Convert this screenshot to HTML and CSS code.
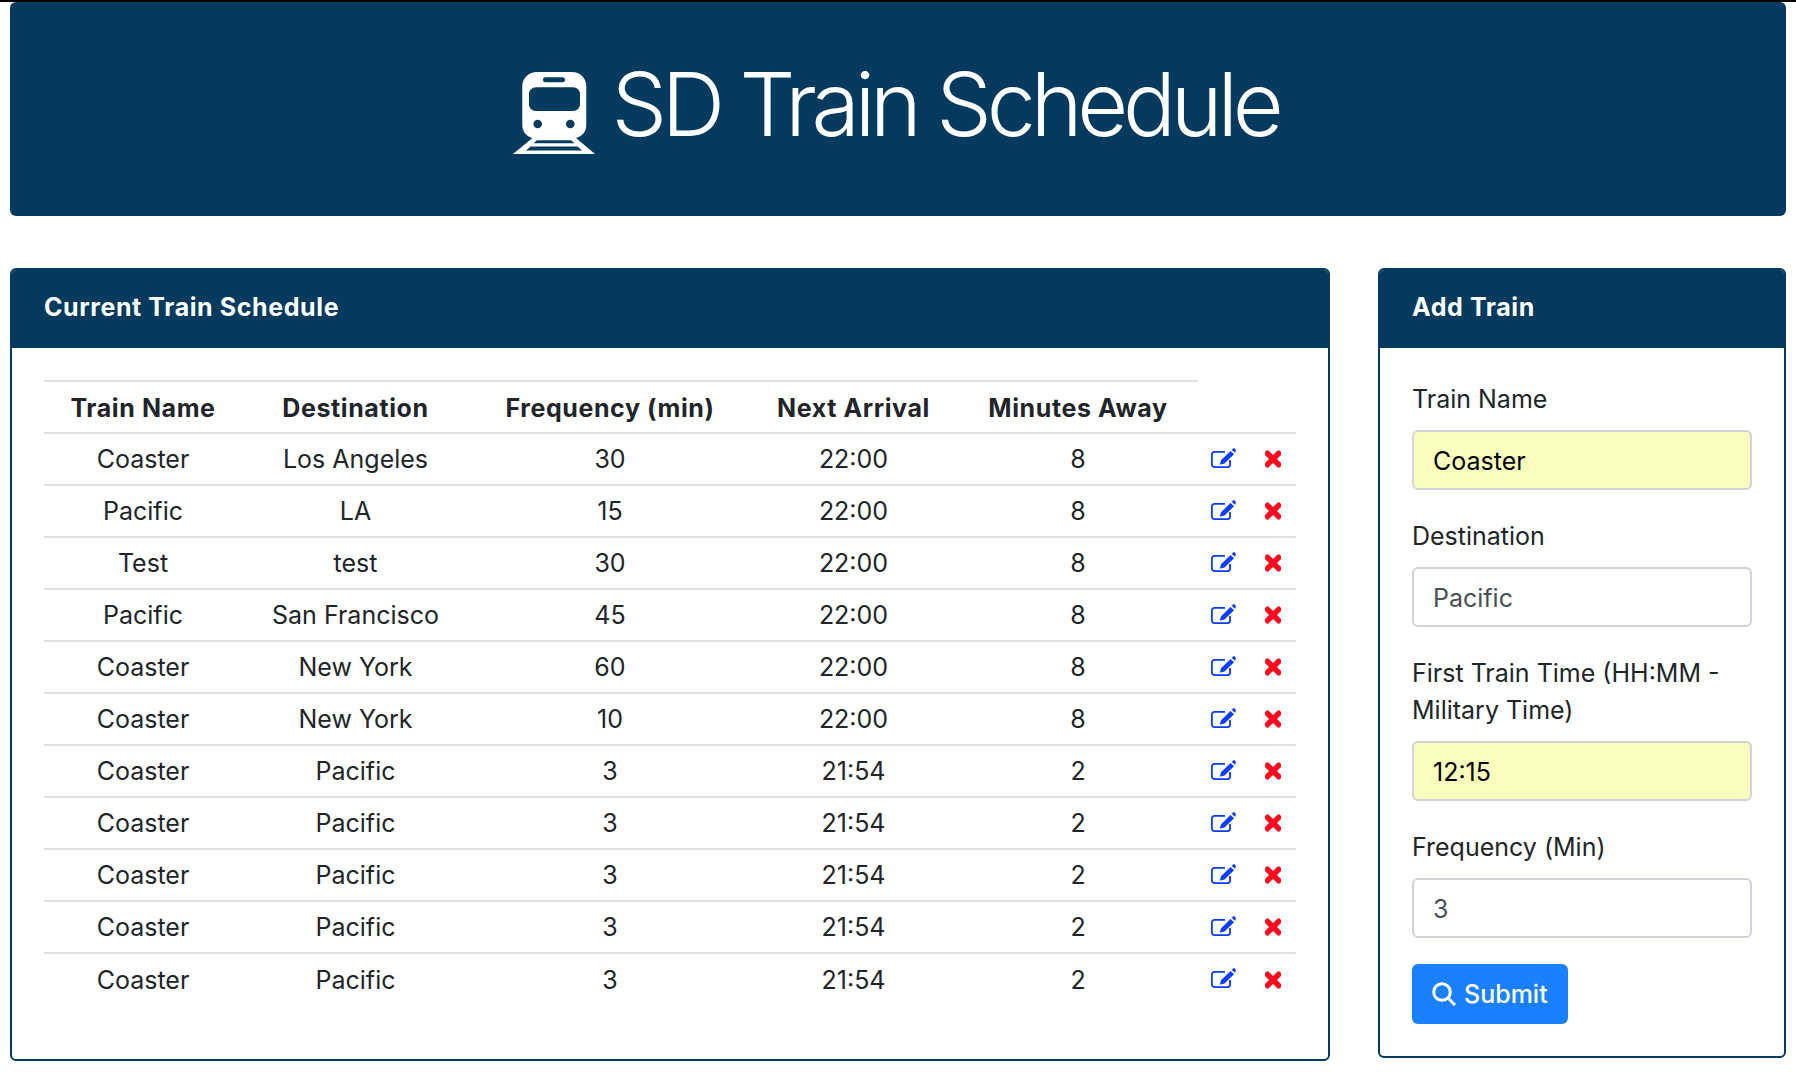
FILE: index.html
```html
<!DOCTYPE html>
<html lang="en">
<head>
<meta charset="utf-8">
<title>SD Train Schedule</title>
<link rel="stylesheet" href="styles.css">
</head>
<body>
<svg class="sprite" aria-hidden="true">
  <symbol id="edit" viewBox="0 0 25 20"><path class="edit-box" d="M19 12V16.500C19 18 18 19.100 16.500 19.100H3.500C2 19.100 .9 18 .9 16.500V6.500C.9 5 2 3.800 3.500 3.800H14"/><path d="M19.600 2.900 23 6.200 13.500 15.600 8.800 16.800 10 12.200ZM20.800 1.700 22 .5C22.500 0 23.200 0 23.700 .5L24.600 1.400C25.100 1.900 25.100 2.600 24.600 3.100L24.100 4.900Z"/></symbol>
  <symbol id="times" viewBox="0 0 352 512"><path d="M242.72 256l100.07-100.07c12.28-12.28 12.28-32.19 0-44.48l-22.24-22.24c-12.28-12.28-32.19-12.28-44.48 0L176 189.28 75.93 89.21c-12.28-12.28-32.19-12.28-44.48 0L9.21 111.45c-12.28 12.28-12.28 32.19 0 44.48L109.28 256 9.21 356.07c-12.28 12.28-12.28 32.19 0 44.48l22.24 22.24c12.28 12.28 32.2 12.28 44.48 0L176 322.72l100.07 100.07c12.28 12.28 32.2 12.28 44.48 0l22.24-22.24c12.28-12.28 12.28-32.19 0-44.48L242.72 256z"/></symbol>
</svg>
<div class="page">
  <header class="banner">
    <h1 class="banner-title">
      <svg class="train-icon" viewBox="0 0 82 82" aria-hidden="true">
        <path fill-rule="evenodd" d="M24 0H59C67 0 73.300 6 73.300 14V53C73.300 60 69 64.500 63 66L82 82H0L19.500 66C13.500 64.500 9.300 60 9.300 53V14C9.300 6 16 0 24 0ZM32.500 5.300A2.500 2.500 0 0 0 32.500 10.300H49.500A2.500 2.500 0 0 0 49.500 5.300ZM23 15.300C19 15.300 16 18.300 16 22.300V32C16 36 19 39 23 39H60C64 39 67 36 67 32V22.300C67 18.300 64 15.300 60 15.300ZM24.700 47.700A4.300 4.300 0 1 0 24.700 56.300A4.300 4.300 0 1 0 24.700 47.700ZM57.300 47.700A4.300 4.300 0 1 0 57.300 56.300A4.300 4.300 0 1 0 57.300 47.700ZM24 68.300 20.500 71.300H61.500L58 68.300ZM17.500 74.500 13 78.500H69L64.500 74.500Z"/>
      </svg>
      <span>SD Train Schedule</span>
    </h1>
  </header>

  <main class="columns">
    <section class="card">
      <h2 class="card-header">Current Train Schedule</h2>
      <div class="card-body card-body-table">
        <table class="schedule">
          <colgroup>
            <col class="col-name"><col class="col-dest"><col class="col-freq"><col class="col-next"><col class="col-away"><col class="col-edit"><col class="col-del">
          </colgroup>
          <thead>
            <tr><th>Train Name</th><th>Destination</th><th>Frequency (min)</th><th>Next Arrival</th><th>Minutes Away</th></tr>
          </thead>
          <tbody>
            <tr><td>Coaster</td><td>Los Angeles</td><td>30</td><td>22:00</td><td>8</td><td><svg class="icon-edit"><use href="#edit"/></svg></td><td><svg class="icon-del"><use href="#times"/></svg></td></tr>
            <tr><td>Pacific</td><td>LA</td><td>15</td><td>22:00</td><td>8</td><td><svg class="icon-edit"><use href="#edit"/></svg></td><td><svg class="icon-del"><use href="#times"/></svg></td></tr>
            <tr><td>Test</td><td>test</td><td>30</td><td>22:00</td><td>8</td><td><svg class="icon-edit"><use href="#edit"/></svg></td><td><svg class="icon-del"><use href="#times"/></svg></td></tr>
            <tr><td>Pacific</td><td>San Francisco</td><td>45</td><td>22:00</td><td>8</td><td><svg class="icon-edit"><use href="#edit"/></svg></td><td><svg class="icon-del"><use href="#times"/></svg></td></tr>
            <tr><td>Coaster</td><td>New York</td><td>60</td><td>22:00</td><td>8</td><td><svg class="icon-edit"><use href="#edit"/></svg></td><td><svg class="icon-del"><use href="#times"/></svg></td></tr>
            <tr><td>Coaster</td><td>New York</td><td>10</td><td>22:00</td><td>8</td><td><svg class="icon-edit"><use href="#edit"/></svg></td><td><svg class="icon-del"><use href="#times"/></svg></td></tr>
            <tr><td>Coaster</td><td>Pacific</td><td>3</td><td>21:54</td><td>2</td><td><svg class="icon-edit"><use href="#edit"/></svg></td><td><svg class="icon-del"><use href="#times"/></svg></td></tr>
            <tr><td>Coaster</td><td>Pacific</td><td>3</td><td>21:54</td><td>2</td><td><svg class="icon-edit"><use href="#edit"/></svg></td><td><svg class="icon-del"><use href="#times"/></svg></td></tr>
            <tr><td>Coaster</td><td>Pacific</td><td>3</td><td>21:54</td><td>2</td><td><svg class="icon-edit"><use href="#edit"/></svg></td><td><svg class="icon-del"><use href="#times"/></svg></td></tr>
            <tr><td>Coaster</td><td>Pacific</td><td>3</td><td>21:54</td><td>2</td><td><svg class="icon-edit"><use href="#edit"/></svg></td><td><svg class="icon-del"><use href="#times"/></svg></td></tr>
            <tr><td>Coaster</td><td>Pacific</td><td>3</td><td>21:54</td><td>2</td><td><svg class="icon-edit"><use href="#edit"/></svg></td><td><svg class="icon-del"><use href="#times"/></svg></td></tr>
          </tbody>
        </table>
      </div>
    </section>

    <section class="card card-side">
      <h2 class="card-header">Add Train</h2>
      <form class="card-body">
        <div class="field">
          <label class="field-label" for="name">Train Name</label>
          <input class="field-input is-filled" id="name" type="text" value="Coaster">
        </div>
        <div class="field">
          <label class="field-label" for="dest">Destination</label>
          <input class="field-input" id="dest" type="text" value="Pacific">
        </div>
        <div class="field">
          <label class="field-label" for="first">First Train Time (HH:MM - Military Time)</label>
          <input class="field-input is-filled" id="first" type="text" value="12:15">
        </div>
        <div class="field">
          <label class="field-label" for="freq">Frequency (Min)</label>
          <input class="field-input" id="freq" type="text" value="3">
        </div>
        <button class="submit" type="button">
          <svg class="search-icon" viewBox="0 0 24 24" aria-hidden="true"><circle cx="10" cy="10" r="8.300"/><path d="M16 16L23 23"/></svg>
          Submit
        </button>
      </form>
    </section>
  </main>
</div>
</body>
</html>
```
FILE: styles.css
```css
* { box-sizing: border-box; }

html, body { height: 100%; }

body {
  margin: 0;
  border-top: 2px solid #000;
  background: #fff;
  color: #212529;
  font-family: "Inter", "Liberation Sans", sans-serif;
  font-size: 25px;
  line-height: 36px;
  overflow: hidden;
}

.sprite { display: none; }

.page { padding: 0 10px; }

.banner {
  height: 214px;
  background: #043a5d;
  color: #fff;
  border-radius: 6px;
  display: flex;
  align-items: center;
  justify-content: center;
}

.banner-title {
  margin: 0;
  display: flex;
  align-items: center;
  gap: 16px;
  font-size: 88px;
  font-weight: 300;
  line-height: 1.2;
  letter-spacing: -5.2px;
  transform: translate(-2px, -4px);
}

.train-icon {
  width: 82px;
  height: 82px;
  fill: #fff;
  flex: none;
  margin-top: 16px;
}

.columns {
  margin-top: 52px;
  display: grid;
  grid-template-columns: 1320px 408px;
  column-gap: 48px;
  align-items: start;
}

.card {
  border: 2px solid #043a5d;
  border-radius: 6px;
  overflow: hidden;
  height: 793px;
}

.card-side { height: 790px; }

.card-header {
  margin: 0;
  height: 78px;
  padding: 19px 32px 0;
  background: #043a5d;
  color: #fff;
  font-size: 25px;
  line-height: 36px;
  font-weight: 700;
  letter-spacing: .6px;
}

.card-body { padding: 32px; }

.schedule {
  width: 100%;
  table-layout: fixed;
  border-collapse: collapse;
}

.col-name { width: 198px; }
.col-dest { width: 227px; }
.col-freq { width: 282px; }
.col-next { width: 205px; }
.col-away { width: 242px; }
.col-edit { width: 50px; }
.col-del { width: 48px; }

.schedule th,
.schedule td {
  height: 52px;
  padding: 7px 0;
  text-align: center;
  vertical-align: middle;
  border-top: 2px solid #dee2e6;
}

.schedule th:nth-child(5),
.schedule td:nth-child(5) { padding-left: 2px; }

.schedule th {
  padding-top: 8px;
  padding-bottom: 6px;
  font-weight: 700;
  letter-spacing: .6px;
}

.icon-edit {
  display: block;
  width: 25px;
  height: 20px;
  margin: 0 auto 3px;
  fill: #0d3bff;
}

.edit-box {
  fill: none;
  stroke: #0d3bff;
  stroke-width: 1.8;
}

.icon-del {
  display: block;
  width: 16px;
  height: 24px;
  margin: 0 auto;
  fill: #ff0b1f;
  stroke: #ff0b1f;
  stroke-width: 30;
  overflow: visible;
  transform: translateX(1px);
}

.field { margin-bottom: 27px; }

.field-label {
  display: block;
  padding-top: 1px;
  margin-bottom: 12px;
  line-height: 37px;
}

.field-input {
  display: block;
  width: 100%;
  height: 60px;
  padding: 2px 19px 0;
  border: 2px solid #ced4da;
  border-radius: 6px;
  background: #fff;
  color: #495057;
  font: inherit;
}

.field-input.is-filled {
  background: #faffbd;
  color: #000;
}

.submit {
  display: flex;
  align-items: center;
  gap: 8px;
  width: 156px;
  height: 60px;
  margin-top: -1px;
  padding: 0 20px;
  border: 0;
  border-radius: 6px;
  background: #1a80ff;
  color: #fff;
  font: inherit;
  font-weight: 500;
}

.search-icon {
  width: 24px;
  height: 24px;
  flex: none;
  fill: none;
  stroke: #fff;
  stroke-width: 3;
}
```
